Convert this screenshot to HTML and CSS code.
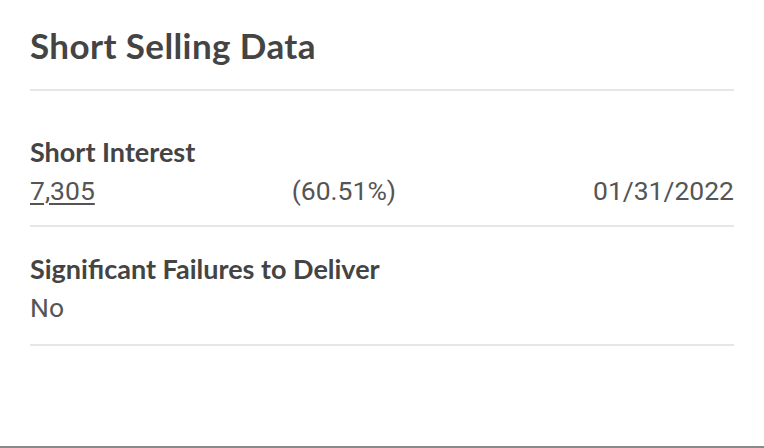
FILE: index.html
```html
<!DOCTYPE html>
<html>
<head>
<meta charset="utf-8">
<link rel="stylesheet" href="styles.css">
</head>
<body>
<div class="page">
  <section class="card">
    <h1 class="title">Short Selling Data</h1>
    <div class="item item-first">
      <h2 class="label">Short Interest</h2>
      <div class="values">
        <a class="link">7,305</a>
        <span>(60.51%)</span>
        <span>01/31/2022</span>
      </div>
    </div>
    <div class="item item-second">
      <h2 class="label">Significant Failures to Deliver</h2>
      <div class="values">
        <span>No</span>
      </div>
    </div>
  </section>
</div>
</body>
</html>
```
FILE: styles.css
```css
html, body {
  margin: 0;
  padding: 0;
  background: #ffffff;
}
.page {
  width: 764px;
  height: 446px;
  border-bottom: 2px solid #8a8a8a;
  overflow: hidden;
}
.card {
  padding: 0 30px;
}
.title {
  margin: 0;
  padding: 24.5px 0 24.5px;
  font-family: Lato, "Open Sans", sans-serif;
  font-weight: 700;
  font-size: 35px;
  letter-spacing: 0.4px;
  line-height: 40px;
  color: #444444;
  border-bottom: 2px solid #e6e6e6;
}
.item {
  border-bottom: 2px solid #e6e6e6;
}
.item-first {
  padding: 44.6px 0 18px;
}
.item-second {
  padding: 26.6px 0 20px;
}
.label {
  margin: 0;
  font-family: Lato, "Open Sans", sans-serif;
  font-weight: 700;
  font-size: 27px;
  line-height: 32px;
  color: #444444;
}
.values {
  margin-top: 7px;
  display: flex;
  justify-content: space-between;
  font-family: Roboto, sans-serif;
  font-size: 26.5px;
  line-height: 32px;
  color: #555555;
}
.link {
  color: #555555;
  text-decoration: underline;
  text-decoration-thickness: 1.5px;
  text-underline-offset: 3px;
}
```
